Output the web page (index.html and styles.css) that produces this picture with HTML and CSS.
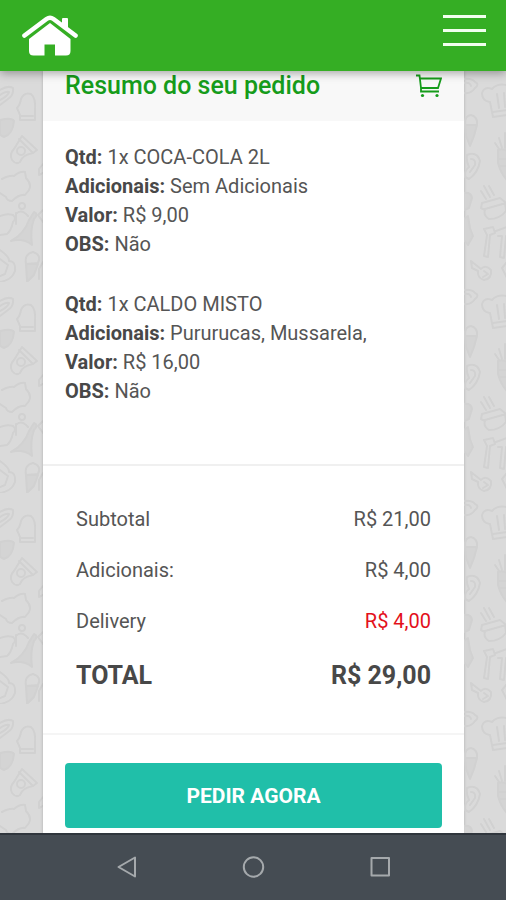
FILE: index.html
```html
<!DOCTYPE html>
<html lang="pt-BR">
<head>
  <meta charset="UTF-8">
  <meta name="viewport" content="width=device-width, initial-scale=1">
  <title>Resumo do seu pedido</title>
  <link rel="stylesheet" href="styles.css">
</head>
<body>

  <header class="topbar">
    <a class="home" href="#" aria-label="Início">
      <svg width="58" height="42" viewBox="0 0 58 42">
        <path d="M2.500 20.500 L24.500 4 Q28 1.500 31.500 4 L53.500 20.500" fill="none" stroke="#fff" stroke-width="4.600" stroke-linecap="round"/>
        <path d="M40 4 Q40 3 41 3 H45 Q46 3 46 4 V15 L40 10 Z" fill="#fff"/>
        <path d="M28 8 L48.500 24 V36 Q48.500 40.500 44 40.500 H33 V29.500 H22.500 V40.500 H11.500 Q7 40.500 7 36 V24 Z" fill="#fff"/>
      </svg>
    </a>
    <button class="menu" type="button" aria-label="Menu">
      <span class="bar"></span>
      <span class="bar"></span>
      <span class="bar"></span>
    </button>
  </header>

  <main class="content">
    <svg class="side" aria-hidden="true">
      <defs>
        <pattern id="foods-left" width="43" height="211" patternUnits="userSpaceOnUse">
          <g class="doodle">
            <path d="M0 19 Q8 14 13 17 Q14 24 8 28 L0 34 M0 24 Q6 20 9 21 Q8 25 0 29"/>
            <path d="M21 28 Q24 21 31 23 Q36 27 35 39 L35 49 H20 V44 L17 37 Q20 34 21 28 M21 45 H33"/>
            <path class="solid" d="M0 49 Q12 46 14 50 Q13 63 4 66 L0 64 Z"/>
            <path d="M22 65 L37 79 L33 82 Q22 84 20 91 Q16 94 12 89 Q9 83 14 78 Z M19 68 L33 82"/>
            <circle cx="21" cy="80" r="4"/>
            <path d="M2 108 Q10 104 14 105 Q20 100 25 101 L26 107 Q32 113 29 119 L25 124 Q19 123 12 130 Q7 130 6 126 L0 122"/>
            <path d="M0 145 Q7 142 13 144 Q17 147 13 151 Q11 160 7 163 L0 164 M17 142 Q22 138 28 145 M16 142 V153"/>
            <path class="solid" d="M34 141 Q39 143 34 148 Q30 159 32 174 Q24 167 11 170 Q24 163 29 149 Z"/>
            <circle cx="22" cy="135" r="3"/>
            <path d="M26 193 Q24 183 33 181 Q42 184 38 192 Z"/>
            <path class="solid" d="M26 193 H38 L34 204 L27 211 Z"/>
            <path d="M0 179 Q10 186 9 190 Q16 190 15 200 Q12 209 0 211 M0 188 L8 194 L5 203 L0 205"/>
            <path d="M43 93 L39 98 V104 L43 102 M43 139 L38 144 L43 151 M43 191 L39 198 V208"/>
          </g>
        </pattern>
      </defs>
      <rect width="100%" height="100%" fill="url(#foods-left)"/>
    </svg>

    <section class="card">
      <div class="card-head">
        <h1 class="title">Resumo do seu pedido</h1>
        <svg class="cart" width="26" height="24" viewBox="0 0 26 24" aria-hidden="true">
          <path d="M0 1.500 H3.500 L5 14 V17.500 H23 M4 4.500 H25 L22 14 H5" fill="none" stroke="#169c1b" stroke-width="1.800"/>
          <circle cx="6.500" cy="21.500" r="1.600" fill="#169c1b"/>
          <circle cx="21" cy="21.500" r="1.600" fill="#169c1b"/>
        </svg>
      </div>

      <div class="items">
        <p class="item">
          <b>Qtd:</b> 1x COCA-COLA 2L<br>
          <b>Adicionais:</b> Sem Adicionais<br>
          <b>Valor:</b> R$ 9,00<br>
          <b>OBS:</b> Não
        </p>
        <p class="item">
          <b>Qtd:</b> 1x CALDO MISTO<br>
          <b>Adicionais:</b> Pururucas, Mussarela,<br>
          <b>Valor:</b> R$ 16,00<br>
          <b>OBS:</b> Não
        </p>
      </div>

      <table class="totals">
        <tr><th scope="row">Subtotal</th><td>R$ 21,00</td></tr>
        <tr><th scope="row">Adicionais:</th><td>R$ 4,00</td></tr>
        <tr><th scope="row">Delivery</th><td class="delivery">R$ 4,00</td></tr>
        <tr class="total"><th scope="row">TOTAL</th><td>R$ 29,00</td></tr>
      </table>

      <div class="actions">
        <button class="order" type="button">PEDIR AGORA</button>
      </div>
    </section>

    <svg class="side" aria-hidden="true">
      <defs>
        <pattern id="foods-right" width="43" height="211" patternUnits="userSpaceOnUse">
          <g class="doodle">
            <path d="M0 8 Q8 7 11 11 Q16 13 11 17 Q7 23 0 22 M0 12 Q6 11 7 15"/>
            <path d="M29 46 L26 31 Q18 30 18 22 Q20 15 28 18 Q33 12 43 14 M29 46 L43 44 M29 41 L43 39 M33 23 L35 37 M40 22 L41 36"/>
            <path d="M1 54 Q0 45 7 44 Q14 46 13 54 Z"/>
            <path class="solid" d="M1 54 H13 L10 65 L6 75 L2 65 Z"/>
            <path d="M3 84 Q13 80 16 90 Q14 102 5 108 L1 106 Q0 100 5 96 Q2 90 3 84 M7 88 Q12 88 11 94 L6 101"/>
            <path class="solid" d="M34 79 Q39 77 43 80 V109 Q37 103 34 92 Z"/>
            <path d="M35 78 L31 72 M38 77 L35 67 M41 77 V62 M36 88 H42 M37 95 H42"/>
            <path d="M17 120 L22 128 M20 115 L26 126 M25 115 L30 124"/>
            <path d="M18 132 L36 127 L41 131 L42 140 Q36 148 25 148 Q19 144 21 139 L17 137 Z M21 138 L42 132"/>
            <path class="solid" d="M0 122 Q7 121 8 127 L5 137 L0 139 Z M0 148 L4 145 L6 157 L9 165 L4 174 L0 169 Z"/>
            <path d="M20 158 L29 156 L31 162 L26 164 L24 186 L20 185 L23 164 Z M32 160 L43 156 M34 165 H38 L36 186 L40 187 L42 165"/>
            <path d="M7 190 L12 194 L17 198 Q21 193 27 199 Q28 208 20 209 Q13 207 14 200 L8 197 Z M20 200 L24 203 L19 206"/>
            <path d="M43 191 L38 197 L43 207"/>
          </g>
        </pattern>
      </defs>
      <rect width="100%" height="100%" fill="url(#foods-right)"/>
    </svg>
  </main>

  <nav class="navbar" aria-label="Navegação">
    <button class="nav-btn" type="button" aria-label="Voltar">
      <svg width="24" height="24" viewBox="0 0 24 24"><path d="M21 2.500 V21.500 L4.500 12 Z"/></svg>
    </button>
    <button class="nav-btn" type="button" aria-label="Tela inicial">
      <svg width="24" height="24" viewBox="0 0 24 24"><circle cx="12.500" cy="12" r="9.700"/></svg>
    </button>
    <button class="nav-btn" type="button" aria-label="Recentes">
      <svg width="24" height="24" viewBox="0 0 24 24"><rect x="3.500" y="3" width="17.500" height="17.500"/></svg>
    </button>
  </nav>

</body>
</html>
```
FILE: styles.css
```css
* {
  box-sizing: border-box;
}
body {
  margin: 0;
  height: 100vh;
  display: flex;
  flex-direction: column;
  background-color: #dadada;
  color: #555;
  font-family: Roboto, sans-serif;
  font-size: 20px;
  line-height: 29px;
}
button {
  border: 0;
  padding: 0;
  background: none;
  font-family: inherit;
  cursor: pointer;
}
svg {
  display: block;
}
b {
  color: #484848;
}

/* barra superior */
.topbar {
  position: relative;
  z-index: 1;
  flex: none;
  display: flex;
  justify-content: space-between;
  align-items: flex-start;
  padding: 15px 20px 14px 22px;
  background-color: #35ae24;
  box-shadow: 0 2px 9px rgba(0, 0, 0, 0.35);
}
.menu {
  display: flex;
  flex-direction: column;
  gap: 11px;
}
.bar {
  width: 43px;
  height: 3px;
  background-color: #f1ffee;
}

/* resumo do pedido */
.content {
  flex: 1;
  min-height: 0;
  overflow: hidden;
  display: grid;
  grid-template-columns: 43px 1fr 42px;
}
.side {
  width: 100%;
  height: 100%;
}
.doodle {
  fill: none;
  stroke: #d1d1d1;
  stroke-width: 2;
  stroke-linejoin: round;
  stroke-linecap: round;
}
.solid {
  fill: #d4d4d4;
}
.card {
  background-color: #fff;
  box-shadow: 0 0 3px rgba(0, 0, 0, 0.2);
}
.card-head {
  display: flex;
  justify-content: space-between;
  align-items: center;
  padding: 0 22px 21px;
  background-color: #f8f8f8;
}
.title {
  margin: 0;
  color: #169c1b;
  font-size: 25px;
  font-weight: 500;
}
.items {
  padding: 22px 22px 58px;
  border-bottom: 2px solid #f0f0f0;
}
.item {
  margin: 0;
}
.item + .item {
  margin-top: 31px;
}
.totals {
  width: 100%;
  padding: 28px 33px 29px;
  border-bottom: 2px solid #f5f5f5;
  border-spacing: 0;
}
.totals th,
.totals td {
  height: 51px;
  padding: 0;
  font-weight: 400;
  text-align: left;
}
.totals td {
  text-align: right;
}
.totals .delivery {
  color: #e3101b;
}
.totals .total th,
.totals .total td {
  height: 57px;
  color: #484848;
  font-size: 25px;
  font-weight: 700;
}
.actions {
  padding: 28px 22px;
}
.order {
  width: 100%;
  height: 65px;
  border-radius: 4px;
  background-color: #20bfa9;
  color: #fff;
  font-size: 21px;
  font-weight: 700;
}

/* botões do sistema */
.navbar {
  position: relative;
  flex: none;
  display: flex;
  justify-content: center;
  gap: 103px;
  height: 67px;
  padding-bottom: 1px;
  border-top: 2px solid #30363d;
  background-color: #454c53;
}
.nav-btn svg {
  fill: none;
  stroke: #a5a9ac;
  stroke-width: 2;
  stroke-linejoin: round;
}
```
